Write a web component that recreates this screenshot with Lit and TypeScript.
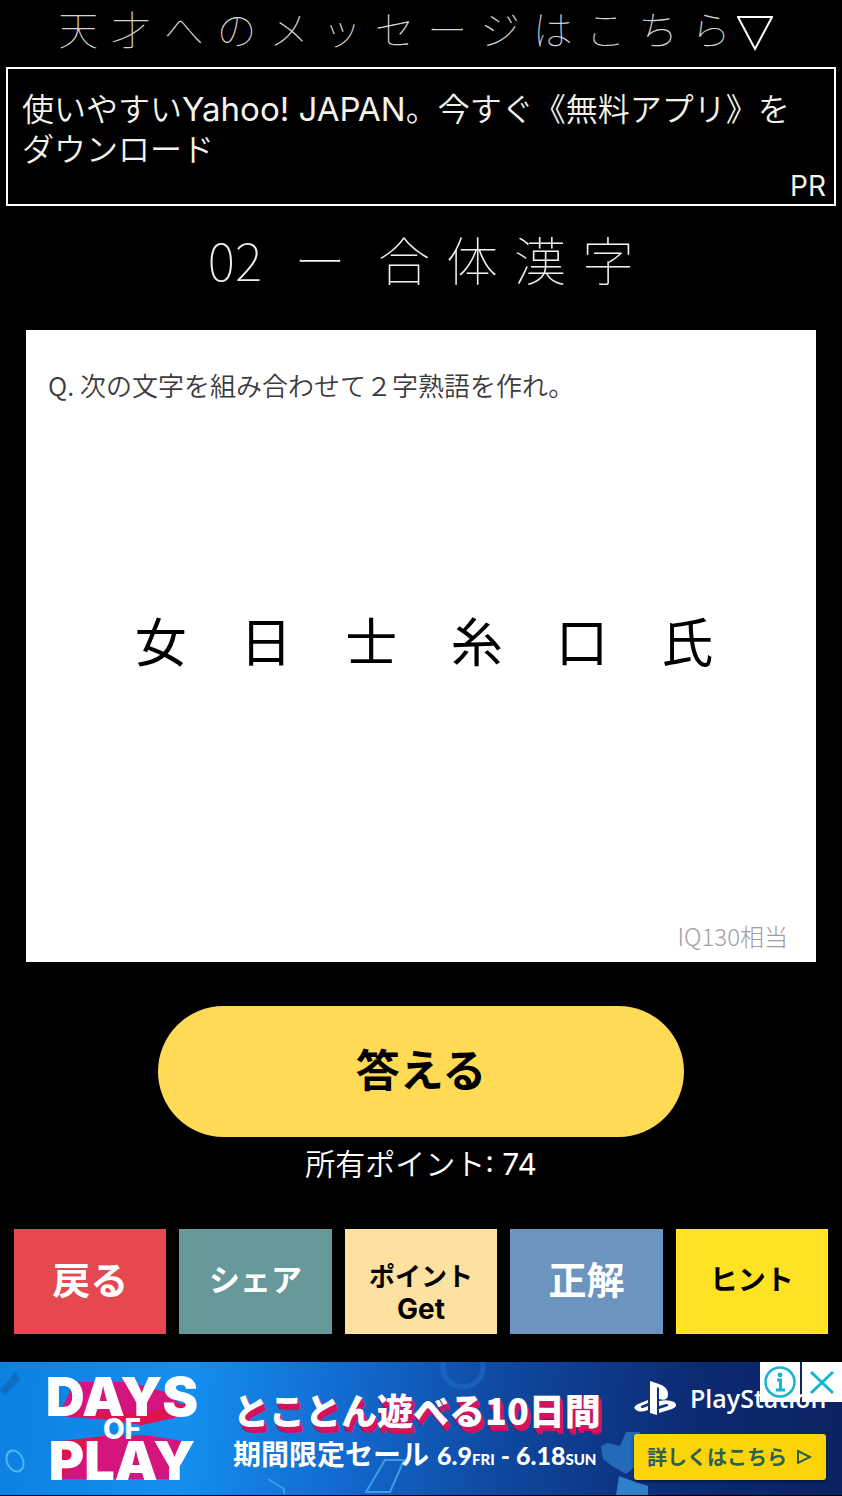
import { LitElement, html, css } from "lit";
import { customElement, state } from "lit/decorators.js";
import { classMap } from "lit/directives/class-map.js";

interface Action {
  label: string[];
  tone: string;
  size: string;
}

@customElement("ad-banner")
class AdBanner extends LitElement {
  static styles = css`
    :host {
      display: block;
      font-family: "Inter", "Noto Sans CJK JP", sans-serif;
      color: #fff;
    }
    .banner {
      position: relative;
      display: flex;
      align-items: center;
      height: 133px;
      padding: 0 16px 0 46px;
      overflow: hidden;
      box-sizing: border-box;
      background: linear-gradient(95deg, #0d80e0 0%, #148ff0 22%, #1268cc 42%, #0f479f 60%, #0c2a72 82%, #0a2262 100%);
    }
    .art {
      position: absolute;
      inset: 0;
      width: 100%;
      height: 100%;
    }
    .logo,
    .copy,
    .brand {
      position: relative;
    }
    .logo {
      flex: none;
      width: 152px;
      display: flex;
      flex-direction: column;
      align-items: center;
      font-family: "Inter", sans-serif;
      font-weight: 900;
      font-size: 54px;
      line-height: 42px;
      white-space: nowrap;
    }
    .logo .of {
      font-size: 28px;
      line-height: 22px;
      font-weight: 800;
    }
    .copy {
      flex: none;
      margin-left: 35px;
      white-space: nowrap;
      padding-top: 6px;
    }
    .head {
      font-family: "Noto Sans CJK JP", sans-serif;
      font-weight: 900;
      font-size: 36px;
      line-height: 48px;
      text-shadow: 1px 2px 0 #d5135f, 2px 4px 0 #d5135f, 3px 6px 0 #c81358;
    }
    .sub {
      display: flex;
      align-items: baseline;
      font-family: "Noto Sans CJK JP", sans-serif;
      font-weight: 700;
      font-size: 28px;
      line-height: 40px;
    }
    .date {
      font-family: "Lato", sans-serif;
      font-weight: 900;
      font-size: 25px;
      margin-left: 8px;
    }
    .date small {
      font-size: 15px;
    }
    .brand {
      margin-left: auto;
      width: 192px;
      display: flex;
      flex-direction: column;
      gap: 12px;
    }
    .ps {
      display: flex;
      align-items: center;
      gap: 14px;
      height: 44px;
      padding-bottom: 4px;
      box-sizing: border-box;
      font-family: "Open Sans", sans-serif;
      font-weight: 600;
      font-size: 25px;
      line-height: 40px;
    }
    .ps svg {
      flex: none;
      width: 42px;
      height: 34px;
    }
    .more {
      display: flex;
      align-items: center;
      justify-content: center;
      gap: 8px;
      height: 46px;
      border-radius: 3px;
      background: #fdd408;
      box-shadow: 0 2px 3px #06184b;
      color: #2b6052;
      font-family: "Noto Sans CJK JP", sans-serif;
      font-weight: 700;
      font-size: 20px;
      line-height: 46px;
      text-decoration: none;
      white-space: nowrap;
    }
    .more svg {
      width: 18px;
      height: 18px;
    }
    .controls {
      position: absolute;
      top: 0;
      right: 0;
      display: flex;
      gap: 2px;
    }
    .controls button {
      width: 40px;
      height: 40px;
      padding: 0;
      border: 0;
      background: #fff;
      cursor: pointer;
    }
    .controls svg {
      display: block;
      width: 40px;
      height: 40px;
    }
  `;

  render() {
    return html`
      <div class="banner">
        <svg class="art" viewBox="0 0 842 133" preserveAspectRatio="none" aria-hidden="true">
          <g fill="#d5147d">
            <path d="M60 50L75 20H130L165 30L190 50L175 56L142 63L112 58L66 55Z" />
            <path d="M55 80L105 74L145 73L188 80L176 117L60 117Z" />
          </g>
          <path d="M60 50L112 58L142 63L192 50L190 40L150 50ZM55 80L105 74L92 82L60 117ZM188 80L165 100L176 117Z" fill="#de1450" />
          <g fill="none" stroke="#4db8f5" stroke-width="2">
            <ellipse cx="15" cy="99" rx="8" ry="11" transform="rotate(-25 15 99)" />
            <path d="M385 98H404L390 130H366Z" opacity=".7" />
            <path d="M268 117L284 127V132" opacity=".6" />
          </g>
          <path d="M0 28L16 9L20 18L5 33Z" fill="#0a64b8" opacity=".6" />
          <circle cx="463" cy="5" r="20" fill="none" stroke="#2270cf" stroke-width="5" opacity=".5" />
          <path d="M601 84L608 81L620 84L626 70L640 70L636 104L626 112L612 104L603 97Z" fill="#226bb8" />
          <path d="M619 114L630 118L648 124V133H616Z" fill="#2f7fc9" />
        </svg>

        <div class="logo">
          <span>DAYS</span>
          <span class="of">OF</span>
          <span>PLAY</span>
        </div>

        <div class="copy">
          <div class="head">とことん遊べる10日間</div>
          <div class="sub">
            期間限定セール
            <span class="date">6.9<small>FRI</small> - 6.18<small>SUN</small></span>
          </div>
        </div>

        <div class="brand">
          <div class="ps">
            <svg viewBox="0 0 42 34" aria-hidden="true">
              <g fill="#fff">
                <path d="M16 0L25 3Q34 6 34 13Q34 21 25 18V8Q25 6 24 6Q23 6 23 8V34L16 32Z" />
                <path d="M14 19V22L7 25Q6 27 9 27L14 25V29Q6 32 2 29Q-2 26 4 23Z" />
                <path d="M25 20Q34 18 40 21Q45 25 38 28L25 32V28L34 25Q35 23 32 23L25 25Z" />
              </g>
            </svg>
            <span>PlayStation</span>
          </div>
          <a class="more" href="#">
            詳しくはこちら
            <svg viewBox="0 0 18 18" aria-hidden="true">
              <path d="M3 3L15 9L3 15Z" fill="none" stroke="#2b6052" stroke-width="2" />
            </svg>
          </a>
        </div>

        <div class="controls">
          <button type="button" aria-label="広告について">
            <svg viewBox="0 0 40 40">
              <circle cx="20" cy="20" r="14.5" fill="none" stroke="#15b4cf" stroke-width="2.5" />
              <circle cx="20" cy="13" r="2.4" fill="#15b4cf" />
              <path d="M17 18H20.500V28M16 28H25" fill="none" stroke="#15b4cf" stroke-width="3" />
            </svg>
          </button>
          <button type="button" aria-label="広告を閉じる">
            <svg viewBox="0 0 40 40">
              <path d="M9 10L31 31M31 10L9 31" fill="none" stroke="#15b4cf" stroke-width="3" />
            </svg>
          </button>
        </div>
      </div>
    `;
  }
}

@customElement("app-root")
class AppRoot extends LitElement {
  static styles = css`
    :host {
      display: flex;
      flex-direction: column;
      min-height: 100vh;
      box-sizing: border-box;
      background: #000;
      color: #fff;
      font-family: "Inter", "Noto Sans CJK JP", sans-serif;
    }
    .message {
      display: grid;
      grid-template-columns: repeat(14, 1fr);
      margin: 0 52px;
      padding-bottom: 10px;
      align-items: center;
      justify-items: center;
      font-family: "Noto Sans CJK JP", sans-serif;
      font-weight: 100;
      font-size: 40px;
      line-height: 57px;
      color: #d8d4d2;
      text-decoration: none;
    }
    .message svg {
      justify-self: start;
      width: 36px;
      height: 36px;
      padding-top: 8px;
    }
    .pr {
      margin: 0 6px;
      padding: 20px 8px 0 14px;
      border: 2px solid #fff;
      font-size: 33px;
      font-weight: 400;
      line-height: 40px;
      color: #f4f3ea;
      text-decoration: none;
    }
    .pr .text {
      display: block;
      padding-right: 20px;
    }
    .ja {
      font-family: "Noto Sans CJK JP", sans-serif;
      font-weight: 350;
      line-height: 1;
    }
    .pr .ja {
      font-size: 32px;
    }
    .pr .tag {
      display: block;
      text-align: right;
      font-size: 28px;
      line-height: 35px;
    }
    h1 {
      display: flex;
      justify-content: center;
      gap: 16px;
      margin: 0;
      padding: 14px 0 32px;
      font-family: "Noto Sans CJK JP", sans-serif;
      font-weight: 100;
      font-size: 52px;
      line-height: 78px;
      color: #f0f0f0;
    }
    .dash {
      padding: 0 16px;
    }
    .card {
      display: flex;
      flex-direction: column;
      justify-content: space-between;
      margin: 0 26px;
      padding: 36px 28px 10px 22px;
      box-sizing: border-box;
      aspect-ratio: 5 / 4;
      background: #fff;
      font-family: "Noto Sans CJK JP", sans-serif;
      font-weight: 350;
    }
    .question {
      margin: 0;
      font-size: 26px;
      line-height: 38px;
      color: #3c3a3e;
    }
    .kanji {
      display: grid;
      grid-template-columns: repeat(6, 1fr);
      justify-items: center;
      margin: 0 0 44px;
      padding: 0 48px 0 60px;
      list-style: none;
      font-size: 52px;
      line-height: 76px;
      color: #000;
      font-weight: 400;
    }
    .level {
      margin: 0;
      text-align: right;
      font-size: 24px;
      font-weight: 300;
      line-height: 32px;
      color: #a39da3;
    }
    .answer {
      align-self: center;
      width: 62.5%;
      height: 131px;
      margin-top: 44px;
      padding: 0 0 8px;
      border: 0;
      border-radius: 66px;
      background: #ffda54;
      color: #000;
      font-family: "Noto Sans CJK JP", sans-serif;
      font-weight: 700;
      font-size: 44px;
      cursor: pointer;
    }
    .points {
      margin: 0;
      text-align: center;
      font-size: 30px;
      line-height: 54px;
    }
    .actions {
      display: grid;
      grid-template-columns: repeat(5, 1fr);
      gap: 13px;
      margin: 38px 14px 28px;
    }
    .actions button {
      display: flex;
      flex-direction: column;
      align-items: center;
      justify-content: center;
      height: 105px;
      padding: 0 0 8px;
      border: 0;
      font-family: "Noto Sans CJK JP", sans-serif;
      font-weight: 700;
      color: #000;
      cursor: pointer;
    }
    .actions .large {
      font-size: 38px;
    }
    .actions .medium {
      font-size: 31px;
    }
    .actions .normal {
      font-size: 28px;
    }
    .actions .small {
      font-size: 26px;
      line-height: 34px;
      padding: 20px 0 0;
    }
    .actions .latin {
      font-family: "Inter", sans-serif;
      font-size: 28px;
    }
    .actions .red {
      background: #e5484e;
      color: #fff;
    }
    .actions .teal {
      background: #67999b;
      color: #fff;
    }
    .actions .cream {
      background: #fde1a1;
    }
    .actions .blue {
      background: #6b94bf;
      color: #fff;
    }
    .actions .yellow {
      background: #ffe224;
    }
  `;

  @state() private points = 74;

  private message = [..."天才へのメッセージはこちら"];
  private kanji = [..."女日士糸口氏"];
  private actions: Action[] = [
    { label: ["戻る"], tone: "red", size: "large" },
    { label: ["シェア"], tone: "teal", size: "medium" },
    { label: ["ポイント", "Get"], tone: "cream", size: "small" },
    { label: ["正解"], tone: "blue", size: "large" },
    { label: ["ヒント"], tone: "yellow", size: "normal" },
  ];

  render() {
    return html`
      <a class="message" href="#">
        ${this.message.map((c) => html`<span>${c}</span>`)}
        <svg viewBox="0 0 36 36" aria-hidden="true">
          <path d="M1 2H35L18 34Z" fill="none" stroke="#fff" stroke-width="2" />
        </svg>
      </a>

      <a class="pr" href="#">
        <span class="text"><span class="ja">使いやすい</span>Yahoo! JAPAN<span class="ja">。今すぐ《無料アプリ》をダウンロード</span></span>
        <span class="tag">PR</span>
      </a>

      <h1><span>02</span><span class="dash">ー</span><span>合</span><span>体</span><span>漢</span><span>字</span></h1>

      <section class="card">
        <p class="question">Q. 次の文字を組み合わせて２字熟語を作れ。</p>
        <ul class="kanji">
          ${this.kanji.map((c) => html`<li>${c}</li>`)}
        </ul>
        <p class="level">IQ130相当</p>
      </section>

      <button class="answer" type="button">答える</button>
      <p class="points"><span class="ja">所有ポイント</span>: ${this.points}</p>

      <nav class="actions">
        ${this.actions.map(
          (a) => html`
            <button type="button" class=${classMap({ [a.tone]: true, [a.size]: true })}>
              ${a.label.map((l, i) => html`<span class=${classMap({ latin: i > 0 })}>${l}</span>`)}
            </button>
          `
        )}
      </nav>

      <ad-banner></ad-banner>
    `;
  }
}
